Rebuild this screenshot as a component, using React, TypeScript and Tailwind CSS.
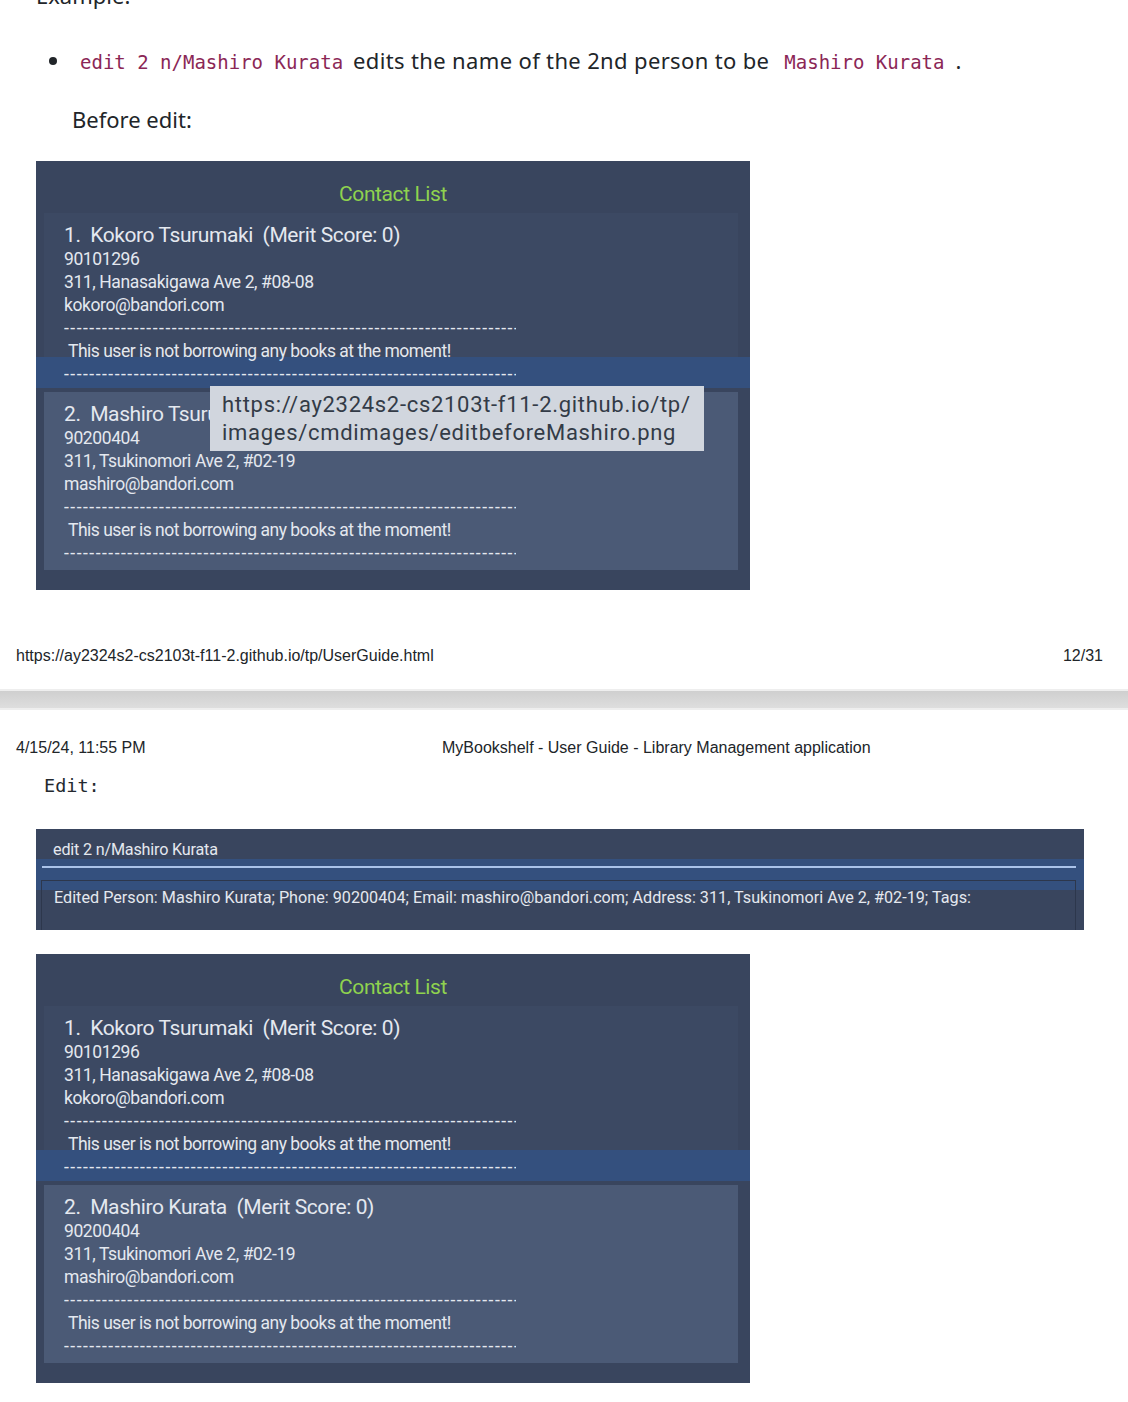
import React from "react";

interface Person {
  index: number;
  name: string;
  phone: string;
  address: string;
  email: string;
}

const kokoro: Person = {
  index: 1,
  name: "Kokoro Tsurumaki",
  phone: "90101296",
  address: "311, Hanasakigawa Ave 2, #08-08",
  email: "kokoro@bandori.com",
};

const DASHES = "-".repeat(80);

const docFont = "font-['Noto_Sans','Open_Sans',sans-serif]";
const monoFont = "font-['DejaVu_Sans_Mono','Liberation_Mono',monospace]";
const appFont = "font-['Roboto','Liberation_Sans',sans-serif]";
const printFont = "font-['Liberation_Sans','Arial',sans-serif]";

const Dashes: React.FC = () => (
  <div className="w-[452px] overflow-hidden whitespace-nowrap h-[23px] leading-[23px] tracking-[1.5px]">
    {DASHES}
  </div>
);

const PersonCard: React.FC<{ person: Person; selected?: boolean }> = ({ person, selected }) => (
  <div
    className={`relative ml-[8px] mr-[12px] pl-[20px] pt-[9px] ${
      selected ? "bg-[#3c4963] pb-[2px]" : "bg-[#4b5a76] pb-[5px]"
    }`}
  >
    {selected && (
      <div className="absolute -left-[8px] -right-[12px] bottom-0 h-[31px] bg-[#34507e]" />
    )}
    <div className="relative text-[#e4e8ef] text-[17.5px] tracking-[-0.4px]">
      <div className="h-[26px] leading-[26px] text-[21px] tracking-[-0.4px]">
        {person.index}.&nbsp; {person.name}&nbsp; (Merit Score: 0)
      </div>
      <div className="h-[23px] leading-[23px]">{person.phone}</div>
      <div className="h-[23px] leading-[23px]">{person.address}</div>
      <div className="h-[23px] leading-[23px]">{person.email}</div>
      <Dashes />
      <div className="h-[23px] leading-[23px] pl-[4px] tracking-[-0.5px]">
        This user is not borrowing any books at the moment!
      </div>
      <Dashes />
    </div>
  </div>
);

const ContactListShot: React.FC<{ second: Person; tooltip?: boolean }> = ({ second, tooltip }) => (
  <div className={`relative ml-[36px] w-[714px] bg-[#39455e] pb-[20px] ${appFont}`}>
    <div className="h-[52px] pt-[19px] text-center text-[#8fd24f] text-[21px] leading-[28px] tracking-[-0.4px]">
      Contact List
    </div>
    <PersonCard person={kokoro} selected />
    <div className="h-[4px]" />
    <PersonCard person={second} />
    {tooltip && (
      <div className="absolute left-[174px] top-[225px] w-[494px] h-[65px] bg-[#d1d6de] pl-[12px] pt-[5px] text-[#333b47] text-[22px] leading-[28px] tracking-[0.7px]">
        <div>https://ay2324s2-cs2103t-f11-2.github.io/tp/</div>
        <div>images/cmdimages/editbeforeMashiro.png</div>
      </div>
    )}
  </div>
);

const CommandBox: React.FC = () => (
  <div className={`ml-[36px] w-[1048px] h-[101px] bg-[#39455e] text-[#e4e8ef] text-[16.2px] ${appFont}`}>
    <div className="h-[30px] pt-[12px] pl-[17px] leading-[18px] tracking-[-0.2px]">edit 2 n/Mashiro Kurata</div>
    <div className="h-[31px] bg-[#34507e] pt-[7px]">
      <div className="ml-[6px] mr-[8px] h-[2px] bg-[#aac3ea]" />
    </div>
    <div className="-mt-[10px] ml-[5px] mr-[8px] h-[50px] border-x border-t border-[#2d374c] pt-[8px] pl-[12px] leading-[18px] whitespace-nowrap">
      Edited Person: Mashiro Kurata; Phone: 90200404; Email: mashiro@bandori.com; Address: 311, Tsukinomori Ave 2, #02-19; Tags:
    </div>
  </div>
);

export default function App() {
  return (
    <div className="w-[1128px] h-[1402px] overflow-hidden bg-white text-[#212529]">
      {/* page 12 */}
      <div className={`${docFont} text-[22px] leading-[33px]`}>
        <div className="-mt-[21px] pl-[36px]">Example:</div>
        <ul className="mt-[32px] pl-[72px] list-disc marker:text-[#212529]">
          <li className="pl-[8px] tracking-[0.35px]">
            <code className={`${monoFont} text-[19px] text-[#8b2756] tracking-normal mr-[10px]`}>edit 2 n/Mashiro Kurata</code>
            edits the name of the 2nd person to be
            <code className={`${monoFont} text-[19px] text-[#8b2756] tracking-normal ml-[15px] mr-[5px]`}>Mashiro Kurata</code> .
          </li>
        </ul>
        <div className="mt-[24px] pl-[72px]">Before edit:</div>
      </div>
      <div className="mt-[25px]">
        <ContactListShot
          second={{
            index: 2,
            name: "Mashiro Tsurumaki",
            phone: "90200404",
            address: "311, Tsukinomori Ave 2, #02-19",
            email: "mashiro@bandori.com",
          }}
          tooltip
        />
      </div>

      {/* print footer */}
      <div className={`mt-[57px] flex justify-between pl-[16px] pr-[25px] text-[16px] leading-[18px] ${printFont}`}>
        <span>https://ay2324s2-cs2103t-f11-2.github.io/tp/UserGuide.html</span>
        <span>12/31</span>
      </div>

      {/* page break */}
      <div className="mt-[24px] h-[21px] border-y-2 border-[#eeeeee] bg-gradient-to-b from-[#cfcfcf] to-[#dedede]" />

      {/* page 13 header */}
      <div className={`mt-[29px] flex pl-[16px] text-[16px] leading-[18px] ${printFont}`}>
        <span className="w-[426px]">4/15/24, 11:55 PM</span>
        <span>MyBookshelf - User Guide - Library Management application</span>
      </div>

      <div className={`mt-[15px] pl-[44px] ${monoFont} text-[18.5px] leading-[28px] text-[#24292f]`}>Edit:</div>

      <div className="mt-[29px]">
        <CommandBox />
      </div>

      <div className="mt-[24px]">
        <ContactListShot
          second={{
            index: 2,
            name: "Mashiro Kurata",
            phone: "90200404",
            address: "311, Tsukinomori Ave 2, #02-19",
            email: "mashiro@bandori.com",
          }}
        />
      </div>
    </div>
  );
}
